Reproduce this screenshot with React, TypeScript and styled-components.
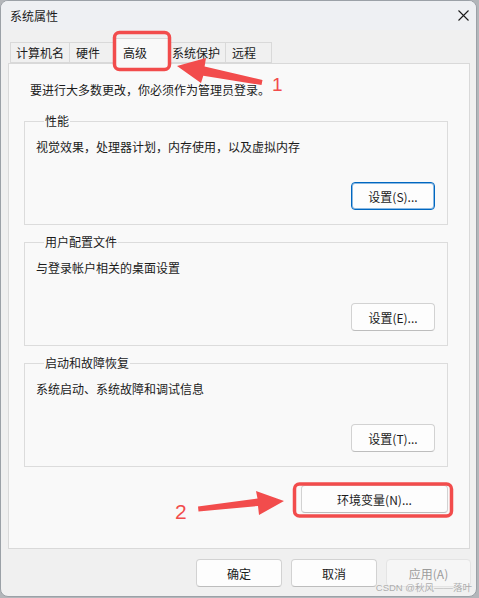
import React from "react"
import styled, { createGlobalStyle } from "styled-components"

const GlobalStyle = createGlobalStyle`
  html, body {
    margin: 0;
    padding: 0;
  }
  body {
    background: #b3b6ba;
    font-family: "Noto Sans CJK SC", "Microsoft YaHei", sans-serif;
    font-size: 12px;
    color: #1b1b1b;
  }
`

const Window = styled.div`
  position: relative;
  width: 477px;
  height: 597px;
  box-sizing: border-box;
  border: 1px solid #9ba1a7;
  border-radius: 8px;
  background: #f0f0f0;
  display: flex;
  flex-direction: column;
  overflow: hidden;
`

const TitleBar = styled.div`
  height: 29px;
  display: flex;
  align-items: center;
  justify-content: space-between;
  padding: 0 7px 0 9px;
  background: #eef0f3;
  line-height: 16px;
`

const Body = styled.div`
  padding: 0 7px;
  display: flex;
  flex-direction: column;
`

const TabStrip = styled.div`
  margin-top: 8px;
  height: 25px;
  display: flex;
  align-items: flex-end;
  padding-left: 2px;
  position: relative;
  z-index: 1;
`

const Tab = styled.div<{ $width: number; $padLeft: number; $active?: boolean }>`
  box-sizing: border-box;
  width: ${(p) => p.$width}px;
  height: ${(p) => (p.$active ? 26 : 21)}px;
  margin-right: -1px;
  margin-left: ${(p) => (p.$active ? -2 : 0)}px;
  margin-bottom: ${(p) => (p.$active ? -1 : 0)}px;
  padding-left: ${(p) => p.$padLeft}px;
  padding-top: ${(p) => (p.$active ? 2 : 0)}px;
  display: flex;
  align-items: center;
  border: 1px solid #d9d9d9;
  border-bottom: ${(p) => (p.$active ? "none" : "1px solid #d9d9d9")};
  background: ${(p) => (p.$active ? "#f9f9f9" : "#f0f0f0")};
  position: relative;
  z-index: ${(p) => (p.$active ? 2 : 1)};
  white-space: nowrap;
`

const Panel = styled.div`
  box-sizing: border-box;
  width: 462px;
  height: 486px;
  border: 1px solid #d9d9d9;
  background: #f9f9f9;
  padding: 17px 0 0 15px;
  display: flex;
  flex-direction: column;
`

const Intro = styled.div`
  line-height: 18px;
  padding-left: 6px;
`

const Group = styled.fieldset<{ $first?: boolean }>`
  box-sizing: border-box;
  width: 424px;
  margin: ${(p) => (p.$first ? 14 : 9)}px 0 0 0;
  padding: 0 12px 14px 11px;
  border: 1px solid #dcdcdc;
  display: flex;
  flex-direction: column;
  min-inline-size: auto;
`

const Legend = styled.legend`
  margin-left: 8px;
  padding: 0 1px;
  line-height: 16px;
  font-size: 12px;
`

const Desc = styled.div`
  margin-top: 9px;
  line-height: 18px;
`

const ButtonRow = styled.div<{ $top: number }>`
  margin-top: ${(p) => p.$top}px;
  display: flex;
  justify-content: flex-end;
  gap: 10px;
`

const EnvRow = styled.div`
  width: 424px;
  margin-top: 18px;
  display: flex;
  justify-content: flex-end;
`

const Button = styled.button<{ $width: number; $primary?: boolean }>`
  box-sizing: border-box;
  width: ${(p) => p.$width}px;
  height: 28px;
  padding: 0;
  border-radius: 4px;
  font-family: inherit;
  font-size: 12px;
  color: #1b1b1b;
  background: #fdfdfd;
  border: 1px solid ${(p) => (p.$primary ? "#0067c0" : "#d2d2d2")};
  border-bottom-color: ${(p) => (p.$primary ? "#0067c0" : "#bdbdbd")};
  box-shadow: ${(p) => (p.$primary ? "inset 0 0 0 1px rgba(0,103,192,0.45)" : "none")};

  &:disabled {
    background: #f6f6f6;
    border-color: #e4e4e4;
    color: #9c9c9c;
  }
`

const Footer = styled.div`
  margin-top: 10px;
  width: 463px;
  display: flex;
  justify-content: flex-end;
  gap: 9px;
`

const Watermark = styled.span`
  position: absolute;
  right: 4px;
  bottom: 3px;
  font-size: 9.5px;
  line-height: 11px;
  color: rgba(150, 150, 150, 0.75);
  font-family: "Liberation Sans", "Noto Sans CJK SC", sans-serif;
  white-space: nowrap;
`

const Overlay = styled.svg`
  position: absolute;
  left: -1px;
  top: -1px;
  pointer-events: none;
  z-index: 5;
`

const MarkText = styled.text`
  font-family: "Liberation Sans", Arial, sans-serif;
  fill: #f24c4c;
`

const RED = "#f24c4c"

const CloseIcon: React.FC = () => (
  <svg width="11" height="11" viewBox="0 0 11 11">
    <path d="M0.5 0.5 L10.5 10.5 M10.5 0.5 L0.5 10.5" stroke="#1b1b1b" strokeWidth="1.1" fill="none" />
  </svg>
)

const tabs = [
  { label: "计算机名", width: 60, padLeft: 5 },
  { label: "硬件", width: 47, padLeft: 6 },
  { label: "高级", width: 56, padLeft: 9, active: true },
  { label: "系统保护", width: 58, padLeft: 3 },
  { label: "远程", width: 47, padLeft: 6 },
]

const groups = [
  { title: "性能", desc: "视觉效果，处理器计划，内存使用，以及虚拟内存", button: "设置(S)...", primary: true },
  { title: "用户配置文件", desc: "与登录帐户相关的桌面设置", button: "设置(E)..." },
  { title: "启动和故障恢复", desc: "系统启动、系统故障和调试信息", button: "设置(T)..." },
]

const App: React.FC = () => {
  return (
    <>
      <GlobalStyle />
      <Window>
        <TitleBar>
          <span>系统属性</span>
          <CloseIcon />
        </TitleBar>
        <Body>
          <TabStrip>
            {tabs.map((t) => (
              <Tab key={t.label} $width={t.width} $padLeft={t.padLeft} $active={t.active}>
                {t.label}
              </Tab>
            ))}
          </TabStrip>
          <Panel>
            <Intro>要进行大多数更改，你必须作为管理员登录。</Intro>
            {groups.map((g, i) => (
              <Group key={g.title} $first={i === 0}>
                <Legend>{g.title}</Legend>
                <Desc>{g.desc}</Desc>
                <ButtonRow $top={26}>
                  <Button $width={84} $primary={g.primary}>
                    {g.button}
                  </Button>
                </ButtonRow>
              </Group>
            ))}
            <EnvRow>
              <Button $width={147}>环境变量(N)...</Button>
            </EnvRow>
          </Panel>
          <Footer>
            <Button $width={86}>确定</Button>
            <Button $width={86}>取消</Button>
            <Button $width={85} disabled>
              应用(A)
            </Button>
          </Footer>
        </Body>
        <Watermark>CSDN @秋风——落叶</Watermark>
        <Overlay width="479" height="598" viewBox="0 0 479 598">
          <rect x="114.5" y="32.5" width="55" height="37" rx="5" fill="none" stroke={RED} strokeWidth="3.5" />
          <polygon
            points="177,66 206,58 204.6,66.5 262.5,80 261.5,85 203.3,75.8 201,83"
            fill={RED}
          />
          <MarkText x="272" y="91" fontSize="19">1</MarkText>
          <rect x="294.5" y="484" width="157" height="32" rx="5" fill="none" stroke={RED} strokeWidth="3.5" />
          <polygon
            points="284,501 256,491 257.5,498.5 198,506.5 198.5,511.5 258,506 259,515"
            fill={RED}
          />
          <MarkText x="175" y="519" fontSize="21">2</MarkText>
        </Overlay>
      </Window>
    </>
  )
}

export default App
